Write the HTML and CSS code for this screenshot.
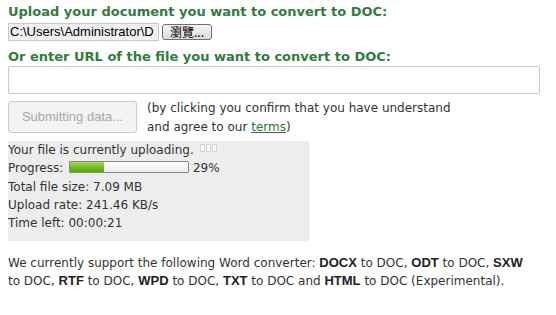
FILE: index.html
```html
<!DOCTYPE html>
<html>
<head>
<meta charset="utf-8">
<link rel="stylesheet" href="styles.css">
</head>
<body>
<div class="page">
  <h2 class="heading">Upload your document you want to convert to DOC:</h2>
  <div class="file-row">
    <span class="file-path">C:\Users\Administrator\D</span>
    <span class="browse">瀏覽...</span>
  </div>
  <h2 class="heading heading-url">Or enter URL of the file you want to convert to DOC:</h2>
  <div class="url-input"></div>
  <div class="submit-row">
    <span class="submit-btn">Submitting data...</span>
    <p class="confirm">(by clicking you confirm that you have understand<br>and agree to our <a href="#" class="terms">terms</a>)</p>
  </div>
  <div class="status">
    <div class="line">Your file is currently uploading. <span class="dots"><i></i><i></i><i></i></span></div>
    <div class="line progress-line">Progress: <span class="bar"><span class="fill" style="width:29%"></span></span> 29%</div>
    <div class="line">Total file size: 7.09 MB</div>
    <div class="line">Upload rate: 241.46 KB/s</div>
    <div class="line">Time left: 00:00:21</div>
  </div>
  <p class="support">We currently support the following Word converter: <b>DOCX</b> to DOC, <b>ODT</b> to DOC, <b>SXW</b> to DOC, <b>RTF</b> to DOC, <b>WPD</b> to DOC, <b>TXT</b> to DOC and <b>HTML</b> to DOC (Experimental).</p>
</div>
</body>
</html>
```

FILE: styles.css
```css
html, body { margin: 0; padding: 0; background: #fff; }
.page {
  padding: 4px 8px 0 8px;
  font-family: "DejaVu Sans", Verdana, sans-serif;
  font-size: 12px;
  color: #333;
}
.heading {
  margin: 0;
  font-size: 13px;
  font-weight: bold;
  color: #2f7d3b;
  line-height: 16px;
}
.file-row {
  display: flex;
  align-items: center;
  margin-top: 3px;
  height: 18px;
  font-family: "Liberation Sans", Arial, sans-serif;
  font-size: 13px;
  color: #000;
}
.file-path {
  width: 148px;
  height: 16px;
  line-height: 16px;
  background: #f0f0f0;
  border: 1px solid #c8c8c8;
  overflow: hidden;
  white-space: nowrap;
  padding-left: 1px;
  box-sizing: content-box;
}
.browse {
  margin-left: 3px;
  width: 48px;
  height: 14px;
  line-height: 14px;
  border: 1px solid #707070;
  border-radius: 3px;
  background: linear-gradient(#f6f6f6, #dcdcdc);
  text-align: center;
  font-size: 12px;
  font-family: "Noto Sans CJK TC", sans-serif;
}
.heading-url { margin-top: 8px; }
.url-input {
  margin-top: 1px;
  width: 530px;
  height: 26px;
  border: 1px solid #c9c9c9;
  border-radius: 2px;
  background: #fff;
}
.submit-row {
  display: flex;
  align-items: flex-start;
  margin-top: 7px;
}
.submit-btn {
  width: 127px;
  height: 30px;
  line-height: 30px;
  border: 1px solid #c9c9c9;
  border-radius: 3px;
  background: #f3f3f3;
  color: #a8a8a8;
  text-align: center;
  font-family: "Liberation Sans", Arial, sans-serif;
  font-size: 13px;
}
.confirm {
  margin: -2px 0 0 10px;
  line-height: 19px;
  color: #333;
}
.terms { color: #2a7a2a; }
.status {
  margin-top: 4px;
  width: 301px;
  height: 100px;
  background: #ededed;
  padding-top: 0;
  box-sizing: border-box;
}
.line { line-height: 18.3px; height: 18.3px; }
.dots { display: inline-flex; gap: 1px; vertical-align: 2px; margin-left: 2px; }
.dots i { width: 3px; height: 6px; border: 1px solid #d4d4d4; background: #fafafa; }
.bar {
  display: inline-block;
  width: 118px;
  height: 10px;
  margin-left: 2px;
  border: 1px solid #888;
  background: linear-gradient(#ffffff, #ececec);
  vertical-align: -1px;
  border-radius: 1px;
}
.fill {
  display: block;
  height: 100%;
  background: linear-gradient(#a6dc4a, #6cb81e 60%, #5ca812);
}
.support {
  margin: 13px 0 0 0;
  width: 524px;
  line-height: 18px;
  color: #333;
}
.support b { font-family: "Liberation Sans", Arial, sans-serif; font-size: 13px; color: #222; }
```
